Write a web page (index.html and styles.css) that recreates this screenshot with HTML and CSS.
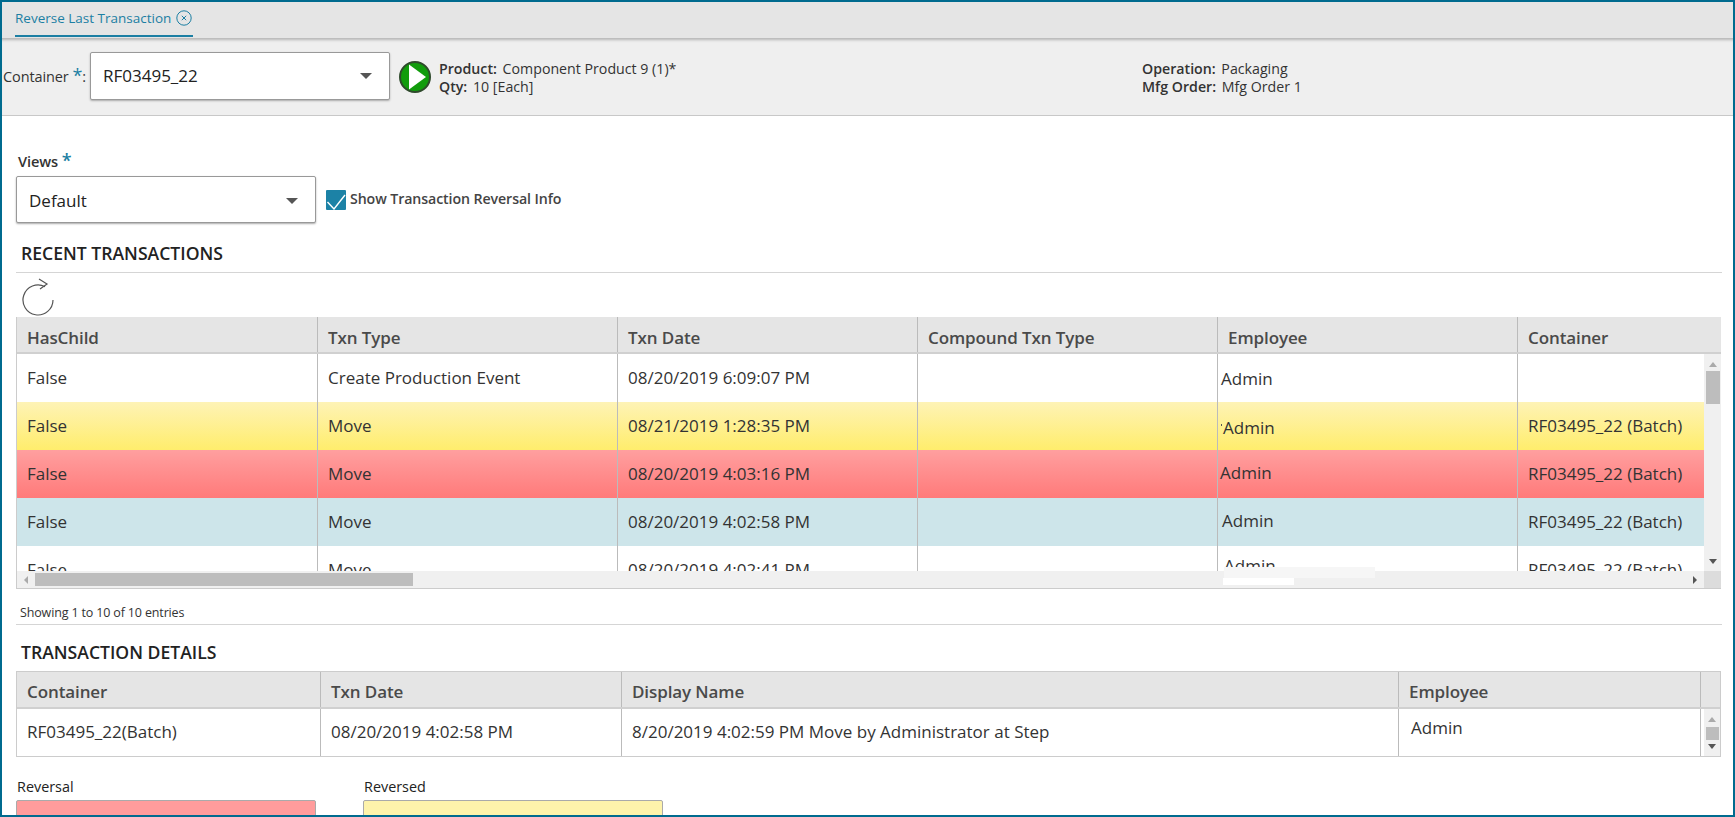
FILE: index.html
```html
<!DOCTYPE html>
<html lang="en">
<head>
    <meta charset="UTF-8">
    <meta name="viewport" content="width=device-width, initial-scale=1.0">
    <title>Reverse Last Transaction</title>
    <link rel="stylesheet" href="styles.css">
</head>
<body>
<div class="frame">
    <!-- Tab strip -->
    <div class="tabbar">
        <div class="tab">
            <span>Reverse Last Transaction</span>
            <svg class="tab-close" width="16" height="16" viewBox="0 0 16 16">
                <circle cx="8" cy="8" r="7.2" fill="none" stroke="#1c7fa3" stroke-width="1"/>
                <path d="M5.8 5.8L10.2 10.2M10.2 5.8L5.8 10.2" stroke="#1c7fa3" stroke-width="1" fill="none"/>
            </svg>
        </div>
    </div>

    <!-- Container header -->
    <div class="header">
        <label class="container-label">Container <span class="req">*</span>:</label>
        <div class="select select-container">
            <span>RF03495_22</span>
            <span class="caret"></span>
        </div>
        <svg class="play" width="32" height="32" viewBox="0 0 32 32">
            <circle cx="16" cy="16" r="15" fill="#119c0c" stroke="#2f4a2c" stroke-width="2"/>
            <path d="M10 3.5L27 16L10 28.5Z" fill="#fff"/>
        </svg>
        <div class="info info-left">
            <div><b>Product:</b> Component Product 9 (1)*</div>
            <div><b>Qty:</b> 10 [Each]</div>
        </div>
        <div class="info">
            <div><b>Operation:</b> Packaging</div>
            <div><b>Mfg Order:</b> Mfg Order 1</div>
        </div>
    </div>

    <div class="content">
        <div class="views-label">Views <span class="req">*</span></div>
        <div class="views-row">
            <div class="select select-views">
                <span>Default</span>
                <span class="caret"></span>
            </div>
            <span class="check">
                <svg width="20" height="20" viewBox="0 0 20 20">
                    <path d="M1.5 12L8 19L19 5" fill="none" stroke="#fff" stroke-width="1.4"/>
                </svg>
            </span>
            <span class="check-label">Show Transaction Reversal Info</span>
        </div>

        <h2 class="section-title recent-title">RECENT TRANSACTIONS</h2>
        <svg class="refresh" width="34" height="38" viewBox="0 0 34 38">
            <path d="M24 8.7A15 15 0 1 0 32 22" fill="none" stroke="#555" stroke-width="1.2"/>
            <path d="M18 1L26 6L19 11" fill="none" stroke="#555" stroke-width="1.2"/>
        </svg>

        <!-- Recent transactions grid -->
        <div class="grid recent">
            <div class="row head">
                <div class="cell">HasChild</div>
                <div class="cell">Txn Type</div>
                <div class="cell">Txn Date</div>
                <div class="cell">Compound Txn Type</div>
                <div class="cell">Employee</div>
                <div class="cell">Container</div>
            </div>
            <div class="grid-main">
                <div class="rows">
                    <div class="row">
                        <div class="cell">False</div>
                        <div class="cell">Create Production Event</div>
                        <div class="cell">08/20/2019 6:09:07 PM</div>
                        <div class="cell"></div>
                        <div class="cell emp emp-1">Admin</div>
                        <div class="cell"></div>
                    </div>
                    <div class="row yellow">
                        <div class="cell">False</div>
                        <div class="cell">Move</div>
                        <div class="cell">08/21/2019 1:28:35 PM</div>
                        <div class="cell"></div>
                        <div class="cell emp emp-2"><span class="tick"></span>Admin</div>
                        <div class="cell">RF03495_22 (Batch)</div>
                    </div>
                    <div class="row red">
                        <div class="cell">False</div>
                        <div class="cell">Move</div>
                        <div class="cell">08/20/2019 4:03:16 PM</div>
                        <div class="cell"></div>
                        <div class="cell emp emp-3">Admin</div>
                        <div class="cell">RF03495_22 (Batch)</div>
                    </div>
                    <div class="row blue">
                        <div class="cell">False</div>
                        <div class="cell">Move</div>
                        <div class="cell">08/20/2019 4:02:58 PM</div>
                        <div class="cell"></div>
                        <div class="cell emp emp-4">Admin</div>
                        <div class="cell">RF03495_22 (Batch)</div>
                    </div>
                    <div class="row">
                        <div class="cell">False</div>
                        <div class="cell">Move</div>
                        <div class="cell">08/20/2019 4:02:41 PM</div>
                        <div class="cell"></div>
                        <div class="cell emp emp-5">Admin</div>
                        <div class="cell">RF03495_22 (Batch)</div>
                    </div>
                </div>
                <div class="vbar">
                    <span class="arrow-up"></span>
                    <span class="vthumb"></span>
                    <span class="arrow-down"></span>
                </div>
            </div>
            <div class="hbar">
                <span class="arrow-left"></span>
                <span class="hthumb"></span>
                <span class="arrow-right"></span>
                <span class="corner"></span>
            </div>
            <!-- painted-out patches over the employee column -->
            <span class="patch patch-a"></span>
            <span class="patch patch-b"></span>
        </div>

        <div class="entries">Showing 1 to 10 of 10 entries</div>

        <h2 class="section-title details-title">TRANSACTION DETAILS</h2>

        <!-- Details grid -->
        <div class="grid details">
            <div class="row head">
                <div class="cell">Container</div>
                <div class="cell">Txn Date</div>
                <div class="cell">Display Name</div>
                <div class="cell">Employee</div>
                <div class="cell"></div>
            </div>
            <div class="row">
                <div class="cell">RF03495_22(Batch)</div>
                <div class="cell">08/20/2019 4:02:58 PM</div>
                <div class="cell">8/20/2019 4:02:59 PM Move by Administrator at Step</div>
                <div class="cell emp-top">Admin</div>
                <div class="cell vbar small">
                    <span class="arrow-up"></span>
                    <span class="vthumb"></span>
                    <span class="arrow-down"></span>
                </div>
            </div>
        </div>

        <div class="legend">
            <div class="legend-item">
                <div class="legend-label">Reversal</div>
                <div class="swatch swatch-red"></div>
            </div>
            <div class="legend-item">
                <div class="legend-label">Reversed</div>
                <div class="swatch swatch-yellow"></div>
            </div>
        </div>
    </div>
</div>
</body>
</html>
```

FILE: styles.css
```css
* {
    box-sizing: border-box;
}
html, body {
    margin: 0;
    height: 100%;
    overflow: hidden;
}
body {
    background: #fff;
    color: #333;
    font-family: "Open Sans", "Noto Sans", sans-serif;
    font-size: 14px;
}
.frame {
    height: 817px;
    border: 2px solid #006b8f;
    overflow: hidden;
    display: flex;
    flex-direction: column;
}
.tabbar {
    height: 36px;
    padding-left: 13px;
    background: #e5e5e5;
    flex: none;
}
.tab {
    width: 178px;
    height: 35px;
    border-bottom: 2px solid #1c7fa3;
    color: #1c7fa3;
    font-size: 13.5px;
    white-space: nowrap;
    display: flex;
    align-items: center;
    justify-content: space-between;
    padding-bottom: 1px;
    padding-right: 1px;
}
.tab-close {
    flex: none;
}
.header {
    height: 78px;
    flex: none;
    display: flex;
    align-items: center;
    padding: 0 0 2px 1px;
    background: #efefef;
    border-bottom: 1px solid #c8c8c8;
    box-shadow: inset 0 4px 3px -2px #b5b5b5;
}
.container-label {
    width: 87px;
    padding-top: 2px;
    font-size: 14.5px;
    letter-spacing: -0.1px;
    white-space: nowrap;
}
.req {
    color: #1c7fa3;
    font-size: 18px;
    line-height: 10px;
}
.select {
    display: flex;
    align-items: center;
    justify-content: space-between;
    background: #fff;
    border: 1px solid #999;
    box-shadow: 0 1px 2px #aaa;
    border-radius: 2px;
    color: #222;
    font-size: 17px;
}
.select-container {
    width: 300px;
    height: 48px;
    padding: 0 17px 0 12px;
}
.select-views {
    width: 300px;
    height: 47px;
    padding: 2px 17px 0 12px;
}
.caret {
    width: 0;
    height: 0;
    border-left: 6px solid transparent;
    border-right: 6px solid transparent;
    border-top: 6px solid #555;
}
.play {
    margin: 2px 0 0 9px;
    flex: none;
}
.info {
    font-size: 14.2px;
    line-height: 18px;
    white-space: nowrap;
    padding-top: 5px;
}
.info b {
    font-weight: 600;
    margin-right: 2px;
}
.info-left {
    margin-left: 8px;
    width: 703px;
}
.content {
    flex: 1;
    padding: 0 0 0 14px;
}
.views-label {
    margin-top: 35px;
    height: 25px;
    padding-left: 2px;
    font-weight: 600;
    font-size: 14.6px;
    letter-spacing: -0.1px;
}
.views-row {
    display: flex;
    align-items: center;
}
.check {
    width: 20px;
    height: 20px;
    margin-left: 10px;
    background: #1c82a6;
    border-radius: 1px;
    flex: none;
}
.check svg {
    display: block;
}
.check-label {
    margin-left: 4px;
    padding-bottom: 2px;
    font-size: 14.2px;
    letter-spacing: -0.1px;
    font-weight: 600;
    color: #444;
}
.section-title {
    margin: 0;
    padding-left: 5px;
    font-size: 17.6px;
    font-weight: 600;
    color: #222;
    width: 1706px;
}
.recent-title {
    margin-top: 16px;
    height: 34px;
    line-height: 28px;
    border-bottom: 1px solid #d5d5d5;
}
.refresh {
    display: block;
    margin: 5px 0 0 5px;
}
.grid {
    position: relative;
    width: 1705px;
    font-size: 17px;
}
.recent {
    margin-top: 1px;
    border-bottom: 1px solid #ccc;
    border-left: 1px solid #ccc;
}
.row {
    display: grid;
    grid-template-columns: 300px 300px 300px 300px 300px 1fr;
    height: 48px;
}
.row.head {
    height: 37px;
    background: #e5e5e5;
    border-bottom: 2px solid #d0d0d0;
    font-weight: 600;
    color: #4a4a4a;
    letter-spacing: -0.1px;
}
.cell {
    display: flex;
    align-items: center;
    padding: 0 8px 2px 10px;
    border-left: 1px solid #bbb;
    white-space: nowrap;
    overflow: hidden;
}
.cell:first-child {
    border-left: none;
}
.recent .head .cell {
    padding: 6px 8px 0 10px;
}
.details .head .cell {
    padding: 4px 8px 0 10px;
}
.grid-main {
    display: flex;
    height: 217px;
    overflow: hidden;
}
.rows {
    flex: 1;
    min-width: 0;
}
.yellow {
    background: linear-gradient(#fef3b6, #ffed6c);
}
.red {
    background: linear-gradient(#ff9f9f, #ff7a7a);
}
.blue {
    background: #cde5ea;
}
.vbar {
    width: 17px;
    flex: none;
    display: flex;
    flex-direction: column;
    align-items: center;
    background: #f0f0f0;
    padding-top: 8px;
}
.vthumb {
    width: 14px;
    height: 33px;
    margin-top: 4px;
    background: #bdbdbd;
}
.arrow-up {
    width: 0;
    height: 0;
    border-left: 4px solid transparent;
    border-right: 4px solid transparent;
    border-bottom: 5px solid #aaa;
}
.arrow-down {
    width: 0;
    height: 0;
    margin-top: auto;
    margin-bottom: 7px;
    border-left: 4px solid transparent;
    border-right: 4px solid transparent;
    border-top: 5px solid #555;
}
.hbar {
    display: flex;
    align-items: center;
    height: 17px;
    background: #f0f0f0;
}
.hthumb {
    width: 378px;
    height: 13px;
    margin-left: 7px;
    background: #bdbdbd;
}
.arrow-left {
    width: 0;
    height: 0;
    margin-left: 7px;
    border-top: 4px solid transparent;
    border-bottom: 4px solid transparent;
    border-right: 4px solid #aaa;
}
.arrow-right {
    width: 0;
    height: 0;
    margin-left: auto;
    margin-right: 7px;
    border-top: 4px solid transparent;
    border-bottom: 4px solid transparent;
    border-left: 4px solid #555;
}
.corner {
    width: 17px;
    height: 17px;
    background: #dcdcdc;
}
.patch {
    position: absolute;
    background: #fff;
}
.patch-a {
    left: 1207px;
    top: 250px;
    width: 151px;
    height: 11px;
    background: #f6f6f6;
}
.patch-b {
    left: 1206px;
    top: 261px;
    width: 71px;
    height: 7px;
}
.emp-1 {
    padding: 0 0 0 3px;
}
.emp-2 {
    padding: 3px 0 0 3px;
}
.tick {
    width: 1px;
    height: 2px;
    margin: 0 1px 6px 0;
    background: #555;
}
.emp-3 {
    padding: 0 0 4px 2px;
}
.emp-4 {
    padding: 0 0 4px 4px;
}
.emp-5 {
    padding: 0 0 10px 6px;
}
.entries {
    width: 1706px;
    height: 36px;
    padding: 15px 0 0 4px;
    font-size: 12.5px;
    letter-spacing: -0.15px;
    border-bottom: 1px solid #d5d5d5;
    line-height: 18px;
}
.details-title {
    height: 46px;
    line-height: 55px;
}
.details {
    border: 1px solid #ccc;
    height: 86px;
}
.details .row {
    grid-template-columns: 303px 301px 777px 302px 1fr;
    height: 47px;
}
.details .row.head {
    height: 37px;
}
.emp-top {
    align-items: flex-start;
    padding: 7px 0 0 12px;
}
.vbar.small {
    width: auto;
    padding: 0 0 0 3px;
    background-clip: content-box;
}
.small .arrow-up {
    margin-top: 8px;
}
.small .vthumb {
    width: 13px;
    height: 13px;
    margin-top: 5px;
}
.legend {
    display: flex;
    gap: 47px;
    margin-top: 21px;
}
.legend-item {
    width: 300px;
}
.legend-label {
    padding-left: 1px;
    font-size: 14.4px;
    color: #222;
    height: 22px;
    line-height: 18px;
}
.swatch {
    height: 40px;
    border: 1px solid #aaa;
    border-radius: 2px;
}
.swatch-red {
    background: #ff9c9c;
}
.swatch-yellow {
    background: #fef3ab;
}
```
